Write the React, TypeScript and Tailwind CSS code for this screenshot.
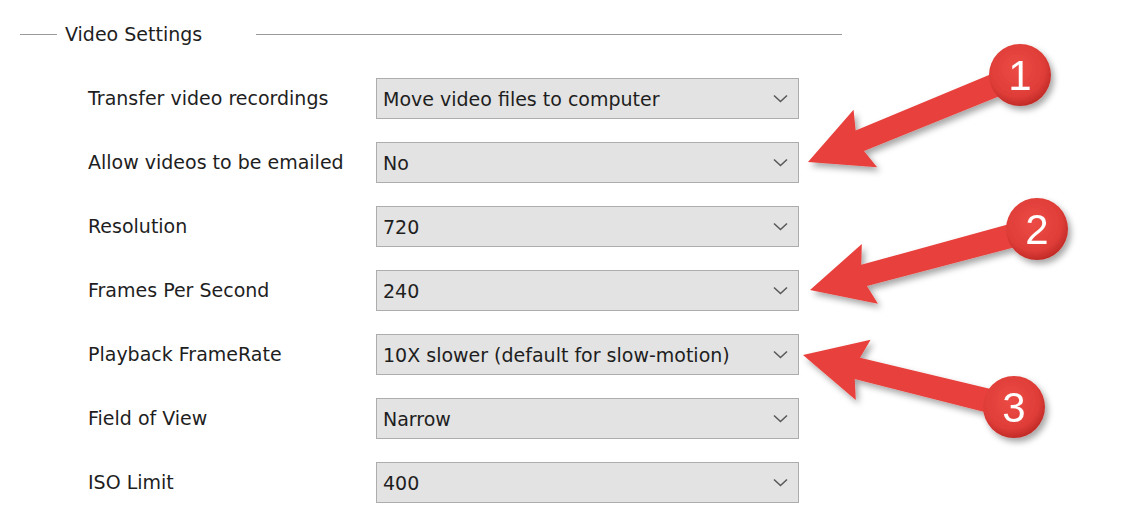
const ROWS = [
  { label: 'Transfer video recordings', value: 'Move video files to computer' },
  { label: 'Allow videos to be emailed', value: 'No' },
  { label: 'Resolution', value: '720' },
  { label: 'Frames Per Second', value: '240' },
  { label: 'Playback FrameRate', value: '10X slower (default for slow-motion)' },
  { label: 'Field of View', value: 'Narrow' },
  { label: 'ISO Limit', value: '400' },
];

// tip = where the arrow points, tail = circle centre
const ARROWS = [
  { n: '1', tip: [808, 162], tail: [1020, 75] },
  { n: '2', tip: [810, 290], tail: [1037, 229] },
  { n: '3', tip: [803, 355], tail: [1014, 407] },
];

const Chevron = () => (
  <svg width="15" height="9" viewBox="0 0 15 9" className="shrink-0">
    <path d="M1 1.5 L7.5 7.5 L14 1.5" fill="none" stroke="#5a5a5a" strokeWidth="1.6" />
  </svg>
);

const Select = ({ value }: { value: string }) => (
  <div className="flex h-[41px] w-[423px] items-center justify-between border border-[#adadad] bg-[#e3e3e3] pl-[6px] pr-[10px]">
    <span className="pt-[2px] text-[19px] text-[#1e1e1e]">{value}</span>
    <Chevron />
  </div>
);

const Annotations = () => (
  <svg className="pointer-events-none absolute left-0 top-0" width="1126" height="520">
    <defs>
      <filter id="shadow" x="-20%" y="-20%" width="140%" height="140%">
        <feDropShadow dx="3" dy="4" stdDeviation="3" floodColor="#000" floodOpacity="0.35" />
      </filter>
      <radialGradient id="ball" cx="45%" cy="40%" r="60%">
        <stop offset="0%" stopColor="#ec4b45" />
        <stop offset="75%" stopColor="#df3d38" />
        <stop offset="100%" stopColor="#c22b27" />
      </radialGradient>
    </defs>
    {ARROWS.map((a) => {
      const dx = a.tail[0] - a.tip[0];
      const dy = a.tail[1] - a.tip[1];
      const len = Math.sqrt(dx * dx + dy * dy);
      const ang = (Math.atan2(dy, dx) * 180) / Math.PI;
      return (
        <g key={a.n} filter="url(#shadow)">
          <path
            transform={`translate(${a.tip[0]} ${a.tip[1]}) rotate(${ang})`}
            d={`M0 0 L62 -31 L56 -11 L${len} -12 L${len} 12 L56 11 L62 31 Z`}
            fill="#e8403c"
          />
          <circle cx={a.tail[0]} cy={a.tail[1]} r="31" fill="url(#ball)" />
          <text
            x={a.tail[0]}
            y={a.tail[1] + 15}
            textAnchor="middle"
            fontSize="42"
            fill="#fff"
            fontFamily="'Liberation Sans', Arial, sans-serif"
          >
            {a.n}
          </text>
        </g>
      );
    })}
  </svg>
);

export default function App() {
  return (
    <div className="relative h-[520px] w-[1126px] overflow-hidden bg-white font-['DejaVu_Sans',Verdana,sans-serif] text-[#1e1e1e]">
      <div className="flex items-center pt-[22px]">
        <div className="ml-[20px] h-px w-[37px] bg-[#9a9a9a]" />
        <span className="ml-[8px] text-[19px] leading-[24px]">Video Settings</span>
        <div className="ml-[54px] h-px w-[586px] bg-[#9a9a9a]" />
      </div>

      <div className="mt-[32px] flex flex-col gap-[23px] pl-[88px]">
        {ROWS.map((r) => (
          <div key={r.label} className="flex items-center">
            <div className="w-[288px] text-[19px]">{r.label}</div>
            <Select value={r.value} />
          </div>
        ))}
      </div>

      <Annotations />
    </div>
  );
}
